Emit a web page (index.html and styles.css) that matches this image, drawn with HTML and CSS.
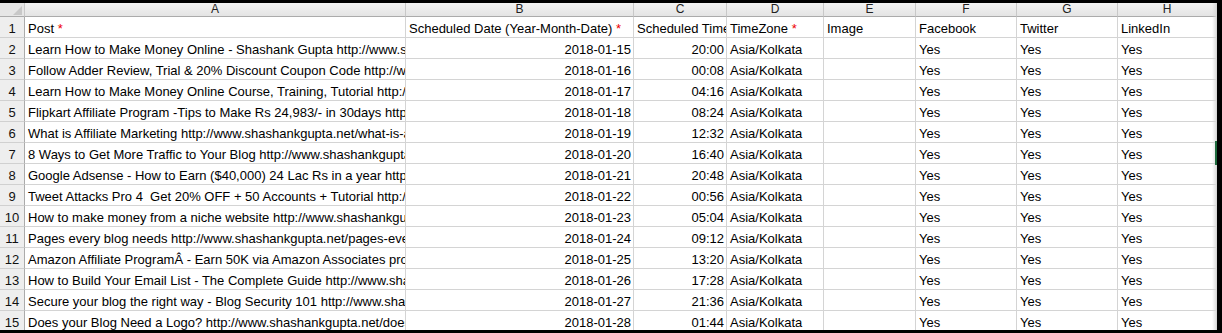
FILE: index.html
```html
<!DOCTYPE html>
<html>
<head>
<meta charset="utf-8">
<link rel="stylesheet" href="styles.css">
</head>
<body>
<div class="frame">
  <div class="sheet">
    <div class="grid">
      <div class="ch corner"><span class="tri"></span></div>
      <div class="ch">A</div><div class="ch">B</div><div class="ch">C</div><div class="ch">D</div><div class="ch">E</div><div class="ch">F</div><div class="ch">G</div><div class="ch">H</div>

      <div class="rh">1</div><div class="c">Post <span class="req">*</span></div><div class="c">Scheduled Date (Year-Month-Date) <span class="req">*</span></div><div class="c">Scheduled Time <span class="req">*</span></div><div class="c">TimeZone <span class="req">*</span></div><div class="c">Image</div><div class="c">Facebook</div><div class="c">Twitter</div><div class="c">LinkedIn</div>

      <div class="rh">2</div><div class="c">Learn How to Make Money Online - Shashank Gupta http://www.shashankgupta.net/</div><div class="c n">2018-01-15</div><div class="c n">20:00</div><div class="c">Asia/Kolkata</div><div class="c"></div><div class="c">Yes</div><div class="c">Yes</div><div class="c">Yes</div>
      <div class="rh">3</div><div class="c">Follow Adder Review, Trial &amp; 20% Discount Coupon Code http://www.shashankgupta.net/</div><div class="c n">2018-01-16</div><div class="c n">00:08</div><div class="c">Asia/Kolkata</div><div class="c"></div><div class="c">Yes</div><div class="c">Yes</div><div class="c">Yes</div>
      <div class="rh">4</div><div class="c">Learn How to Make Money Online Course, Training, Tutorial http://www.shashankgupta.net/</div><div class="c n">2018-01-17</div><div class="c n">04:16</div><div class="c">Asia/Kolkata</div><div class="c"></div><div class="c">Yes</div><div class="c">Yes</div><div class="c">Yes</div>
      <div class="rh">5</div><div class="c">Flipkart Affiliate Program -Tips to Make Rs 24,983/- in 30days http://www.shashankgupta.net/</div><div class="c n">2018-01-18</div><div class="c n">08:24</div><div class="c">Asia/Kolkata</div><div class="c"></div><div class="c">Yes</div><div class="c">Yes</div><div class="c">Yes</div>
      <div class="rh">6</div><div class="c">What is Affiliate Marketing http://www.shashankgupta.net/what-is-affiliate-marketing/</div><div class="c n">2018-01-19</div><div class="c n">12:32</div><div class="c">Asia/Kolkata</div><div class="c"></div><div class="c">Yes</div><div class="c">Yes</div><div class="c">Yes</div>
      <div class="rh">7</div><div class="c">8 Ways to Get More Traffic to Your Blog http://www.shashankgupta.net/</div><div class="c n">2018-01-20</div><div class="c n">16:40</div><div class="c">Asia/Kolkata</div><div class="c"></div><div class="c">Yes</div><div class="c">Yes</div><div class="c">Yes</div>
      <div class="rh">8</div><div class="c">Google Adsense - How to Earn ($40,000) 24 Lac Rs in a year http://www.shashankgupta.net/</div><div class="c n">2018-01-21</div><div class="c n">20:48</div><div class="c">Asia/Kolkata</div><div class="c"></div><div class="c">Yes</div><div class="c">Yes</div><div class="c">Yes</div>
      <div class="rh">9</div><div class="c">Tweet Attacks Pro 4&nbsp; Get 20% OFF + 50 Accounts + Tutorial http://www.shashankgupta.net/</div><div class="c n">2018-01-22</div><div class="c n">00:56</div><div class="c">Asia/Kolkata</div><div class="c"></div><div class="c">Yes</div><div class="c">Yes</div><div class="c">Yes</div>
      <div class="rh">10</div><div class="c">How to make money from a niche website http://www.shashankgupta.net/</div><div class="c n">2018-01-23</div><div class="c n">05:04</div><div class="c">Asia/Kolkata</div><div class="c"></div><div class="c">Yes</div><div class="c">Yes</div><div class="c">Yes</div>
      <div class="rh">11</div><div class="c">Pages every blog needs http://www.shashankgupta.net/pages-every-blog-needs/</div><div class="c n">2018-01-24</div><div class="c n">09:12</div><div class="c">Asia/Kolkata</div><div class="c"></div><div class="c">Yes</div><div class="c">Yes</div><div class="c">Yes</div>
      <div class="rh">12</div><div class="c">Amazon Affiliate ProgramÂ - Earn 50K via Amazon Associates program http://www.shashankgupta.net/</div><div class="c n">2018-01-25</div><div class="c n">13:20</div><div class="c">Asia/Kolkata</div><div class="c"></div><div class="c">Yes</div><div class="c">Yes</div><div class="c">Yes</div>
      <div class="rh">13</div><div class="c">How to Build Your Email List - The Complete Guide http://www.shashankgupta.net/</div><div class="c n">2018-01-26</div><div class="c n">17:28</div><div class="c">Asia/Kolkata</div><div class="c"></div><div class="c">Yes</div><div class="c">Yes</div><div class="c">Yes</div>
      <div class="rh">14</div><div class="c">Secure your blog the right way - Blog Security 101 http://www.shashankgupta.net/</div><div class="c n">2018-01-27</div><div class="c n">21:36</div><div class="c">Asia/Kolkata</div><div class="c"></div><div class="c">Yes</div><div class="c">Yes</div><div class="c">Yes</div>
      <div class="rh">15</div><div class="c">Does your Blog Need a Logo? http://www.shashankgupta.net/does-your-blog-need-a-logo/</div><div class="c n">2018-01-28</div><div class="c n">01:44</div><div class="c">Asia/Kolkata</div><div class="c"></div><div class="c">Yes</div><div class="c">Yes</div><div class="c">Yes</div>
    </div>
    <div class="edge"></div>
    <div class="marker"></div>
  </div>
</div>
</body>
</html>
```
FILE: styles.css
```css
html, body {
  margin: 0;
  padding: 0;
  background: #000;
}
.frame {
  width: 1222px;
  height: 333px;
  padding-top: 3px;
  box-sizing: border-box;
  overflow: hidden;
}
.sheet {
  position: relative;
  width: 1217px;
  height: 327px;
  overflow: hidden;
  background: #fff;
}
.grid {
  display: grid;
  grid-template-columns: 25px 381px 228px 93px 97px 92px 101px 101px 99px;
  grid-template-rows: 14px repeat(15, 21px);
  font-family: "Liberation Sans", Arial, sans-serif;
  font-size: 13px;
  color: #000;
}
.grid > div {
  box-sizing: border-box;
  border-right: 1px solid #d4d4d4;
  border-bottom: 1px solid #d4d4d4;
  white-space: nowrap;
  overflow: hidden;
}
.ch {
  background: linear-gradient(#f3f3f3, #e4e4e4);
  border-right-color: #c8c8c8 !important;
  border-bottom-color: #ababab !important;
  text-align: center;
  line-height: 13px;
  font-size: 12px;
  color: #222;
}
.corner {
  position: relative;
  background: #e6e6e6;
}
.tri {
  position: absolute;
  right: 2px;
  bottom: 1px;
  width: 0;
  height: 0;
  border-left: 9px solid transparent;
  border-bottom: 9px solid #c8c8c8;
}
.rh {
  background: #eeeeee;
  border-right-color: #ababab !important;
  border-bottom-color: #d0d0d0 !important;
  text-align: center;
  line-height: 23px;
  color: #111;
}
.c {
  padding: 0 2px 0 3px;
  line-height: 23px;
}
.c.n {
  text-align: right;
}
.req {
  color: #e00;
}
.edge {
  position: absolute;
  top: 0;
  right: 0;
  width: 5px;
  height: 100%;
  background: linear-gradient(90deg, rgba(255,255,255,0), #d8d8d8);
}
.marker {
  position: absolute;
  top: 138px;
  right: 0;
  width: 2px;
  height: 24px;
  background: #1e6b3e;
}
```
